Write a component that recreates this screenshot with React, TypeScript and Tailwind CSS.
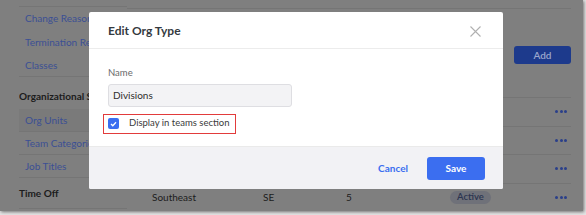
import React from "react";

const font = { fontFamily: "Lato, 'Open Sans', sans-serif" };

function Dots() {
  return (
    <div className="flex gap-[1.5px]">
      <span className="w-[3px] h-[3px] rounded-full bg-[#2a3f8a]" />
      <span className="w-[3px] h-[3px] rounded-full bg-[#2a3f8a]" />
      <span className="w-[3px] h-[3px] rounded-full bg-[#2a3f8a]" />
    </div>
  );
}

export default function App() {
  const rows = [0, 1, 2];
  return (
    <div className="w-[586px] h-[215px] bg-[#e4e4e4] overflow-hidden" style={font}>
      <div className="relative w-[583px] h-[211px] bg-[#7f7f7f] overflow-hidden shadow-[1px_1px_3px_rgba(0,0,0,0.5)] flex">
        {/* left nav */}
        <div className="ml-[19px] w-[108px] shrink-0 mt-[6px] border-t border-[#757575] text-[10px]">
          <div className="h-[23.5px] flex items-center pl-[6px] text-[#3b4f94] whitespace-nowrap overflow-hidden">Change Reasons</div>
          <div className="h-[23.5px] flex items-center pl-[6px] text-[#3b4f94] whitespace-nowrap overflow-hidden">Termination Reasons</div>
          <div className="h-[23px] flex items-center pl-[6px] text-[#3b4f94] whitespace-nowrap overflow-hidden border-b border-[#757575]">Classes</div>
          <div className="h-[32px] flex items-center pt-[6px] text-[#1c1c1c] font-bold whitespace-nowrap overflow-hidden">Organizational Str</div>
          <div className="h-[23px] flex items-center pl-[6px] text-[#3b4f94] bg-[#7a7a7a] border-b border-[#757575]">Org Units</div>
          <div className="h-[23px] flex items-center pl-[6px] text-[#3b4f94] whitespace-nowrap overflow-hidden border-b border-[#757575]">Team Categories</div>
          <div className="h-[23px] flex items-center pl-[6px] text-[#3b4f94] border-b border-[#757575]">Job Titles</div>
          <div className="h-[31px] flex items-center text-[#1c1c1c] font-bold border-b border-[#757575]">Time Off</div>
        </div>
        {/* main */}
        <div className="flex-1 mr-[12px] text-[10px] text-[#1c1c1c]">
          <div className="mt-[8px] border-t border-[#757575] h-[89px] flex items-start justify-end pt-[37px]">
            <div className="w-[57px] h-[18px] rounded-[3px] bg-[#1d3a8c] text-[#9aa6cc] flex items-center justify-center font-semibold">Add</div>
          </div>
          <div className="border-t border-[#757575]">
            {rows.map((r) => (
              <div key={r} className="h-[28.5px] border-b border-[#757575] flex items-center justify-end pr-[4px]">
                <Dots />
              </div>
            ))}
            <div className="h-[28px] flex items-center">
              <span className="ml-[25px] w-[111px]">Southeast</span>
              <span className="w-[83px]">SE</span>
              <span className="w-[104px]">5</span>
              <span className="w-[41px] h-[13px] rounded-full bg-[#6f7179] text-[#2b3450] font-semibold flex items-center justify-center text-[9.5px]">Active</span>
              <span className="ml-auto pr-[4px]"><Dots /></span>
            </div>
          </div>
        </div>

        {/* modal */}
        <div className="absolute left-[89px] top-[12px] w-[414px] h-[177px] bg-white rounded-[2px] flex flex-col overflow-hidden">
          <div className="h-[37px] border-b border-[#ececec] flex items-center justify-between pl-[19px] pr-[22px] pt-[2px]">
            <span className="text-[12px] font-bold text-[#353a3f]">Edit Org Type</span>
            <svg width="11" height="11" viewBox="0 0 11 11">
              <path d="M0.5 0.5 L10.5 10.5 M10.5 0.5 L0.5 10.5" stroke="#b0b0b0" strokeWidth="1.1" />
            </svg>
          </div>
          <div className="flex-1 pl-[19px] pt-[19px]">
            <div className="text-[9.5px] text-[#6a6a6a] leading-none">Name</div>
            <div className="mt-[6px] w-[184px] h-[23px] bg-[#f3f3f5] border border-[#dedee2] rounded-[3px] flex items-center pl-[4px] text-[10px] text-[#2e2e2e]">Divisions</div>
            <div className="mt-[7px] -ml-[5px] w-[133px] h-[20px] border-[1.5px] border-[#e23b3b] flex items-center pl-[4px] whitespace-nowrap">
              <span className="shrink-0 w-[11px] h-[11px] rounded-[2px] bg-[#3b6ef0] flex items-center justify-center">
                <svg width="7" height="6" viewBox="0 0 7 6">
                  <path d="M1 3 L2.8 4.7 L6 1.2" stroke="white" strokeWidth="1.3" fill="none" />
                </svg>
              </span>
              <span className="ml-[10px] text-[9.5px] text-[#3a3a3a] whitespace-nowrap">Display in teams section</span>
            </div>
          </div>
          <div className="h-[43px] bg-[#f2f2f5] border-t border-[#eaeaea] flex items-center justify-end pr-[18px]">
            <span className="text-[10px] font-bold text-[#3b6ef0] mr-[19px]">Cancel</span>
            <div className="w-[58px] h-[23px] rounded-[3px] bg-[#3b6ef0] text-white text-[10px] font-bold flex items-center justify-center">Save</div>
          </div>
        </div>
      </div>
    </div>
  );
}
